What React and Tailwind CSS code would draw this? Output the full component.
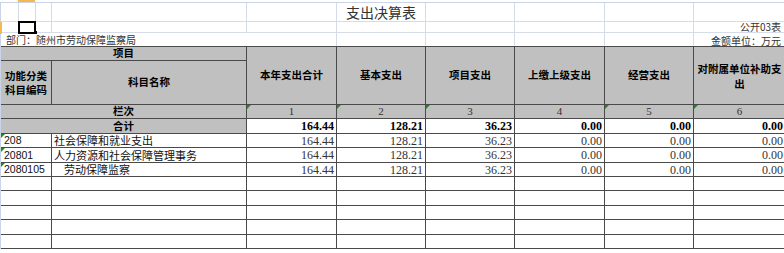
const COLS = 'grid-cols-[18px_17px_16px_195px_90px_89px_89px_90px_89px_91px]';
const CJK = "font-['Noto_Sans_CJK_SC','Noto_Sans',sans-serif]";
const NUM = "font-['Liberation_Serif','Noto_Sans_CJK_SC',serif]";

const rows = [
  { code: '208', name: '社会保障和就业支出', indent: false },
  { code: '20801', name: '人力资源和社会保障管理事务', indent: false },
  { code: '2080105', name: '劳动保障监察', indent: true },
];
const values = ['164.44', '128.21', '36.23', '0.00', '0.00', '0.00'];
const heads = ['本年支出合计', '基本支出', '项目支出', '上缴上级支出', '经营支出'];

function Tri() {
  return (
    <span className="absolute left-0 top-0 w-0 h-0 border-t-[4px] border-r-[4px] border-t-[#1f8a1f] border-r-transparent" />
  );
}

// dark table cell
const cell = 'relative box-border border-r border-b border-[#4a4a4a]';
const grid = 'box-border border-r border-b border-[#d5dce7]';

export default function App() {
  return (
    <div className={`w-[784px] h-[253px] bg-white overflow-hidden text-[#222] ${CJK}`}>
      {/* sheet top (column header edge) */}
      <div className="relative h-[3px] border-b border-[#c9d5e6]">
        <span className="absolute left-[18px] top-0 w-[17px] h-[2px] bg-[#f5b94f]" />
      </div>

      {/* top rows */}
      <div className={`grid ${COLS} grid-rows-[19px_11px_13px] border-l border-[#c9d5e6]`}>
        {/* row 1 */}
        <div className={grid} />
        <div className={grid} />
        <div className={grid} />
        <div className={grid} />
        <div className={grid} />
        <div className={`${grid} flex items-center justify-center text-[14px] leading-none text-[#333] whitespace-nowrap`}>
          支出决算表
        </div>
        <div className={grid} />
        <div className={grid} />
        <div className={grid} />
        <div className={grid} />

        {/* row 2 */}
        <div className={`${grid} relative`}>
          <span className="absolute -left-px top-0 w-[2px] h-[12px] bg-[#f5b94f]" />
        </div>
        <div className="relative box-border border-b border-r border-[#d5dce7]">
          <span className="absolute -left-px -top-px w-[18px] h-[13px] border-2 border-black" />
          <span className="absolute right-[-2px] bottom-[-2px] w-[3px] h-[3px] bg-black" />
        </div>
        <div className={grid} />
        <div className={grid} />
        <div className={grid} />
        <div className={grid} />
        <div className={grid} />
        <div className={grid} />
        <div className={grid} />
        <div className={`${grid} flex items-center justify-end pr-[3px] text-[10px] leading-[10px] text-[#333] whitespace-nowrap`}>
          公开03表
        </div>

        {/* row 3 */}
        <div className="col-span-4 flex items-center pl-[5px] text-[10px] leading-[10px] text-[#333] whitespace-nowrap">
          部门：随州市劳动保障监察局
        </div>
        <div className="border-r border-[#d5dce7]" />
        <div className="border-r border-[#d5dce7]" />
        <div className="border-r border-[#d5dce7]" />
        <div className="border-r border-[#d5dce7]" />
        <div className="border-r border-[#d5dce7]" />
        <div className="flex items-center justify-end pr-[4px] pt-[2px] text-[10px] leading-[10px] text-[#333] whitespace-nowrap">
          金额单位：万元
        </div>
      </div>

      {/* table */}
      <div
        className={`grid ${COLS} grid-rows-[15px_44px_14px_15px_14px_15px_14px_14px_15px_14px_15px_14px] border-l border-[#c9d5e6]`}
      >
        <div className={`${cell} col-span-4 border-t bg-[#c0c0c0] flex items-center justify-center text-[10.5px] font-bold leading-none text-black`}>
          项目
        </div>
        {heads.map((h) => (
          <div
            key={h}
            className={`${cell} row-span-2 border-t bg-[#c0c0c0] flex items-center justify-center text-[10.5px] font-bold leading-none text-black whitespace-nowrap`}
          >
            {h}
          </div>
        ))}
        <div className={`row-span-2 relative box-border border-b border-t border-[#4a4a4a] bg-[#c0c0c0] flex items-center justify-center text-center text-[10.5px] font-bold leading-[15px] text-black`}>
          对附属单位补助支
          <br />
          出
        </div>
        <div className={`${cell} col-span-3 bg-[#c0c0c0] flex items-center justify-center text-center text-[10.5px] font-bold leading-[14px] text-black`}>
          功能分类
          <br />
          科目编码
        </div>
        <div className={`${cell} bg-[#c0c0c0] flex items-center justify-center text-[10.5px] font-bold leading-none text-black`}>
          科目名称
        </div>

        {/* 栏次 */}
        <div className={`${cell} col-span-4 bg-[#c0c0c0] flex items-center justify-center text-[10.5px] font-bold leading-none text-black`}>
          栏次
        </div>
        {[1, 2, 3, 4, 5, 6].map((n) => (
          <div
            key={n}
            className={`${cell} ${n === 6 ? 'border-r-0' : ''} bg-[#c0c0c0] flex items-center justify-center text-[11px] leading-none text-[#333] ${NUM}`}
          >
            {n !== 4 && <Tri />}
            {n}
          </div>
        ))}

        {/* 合计 */}
        <div className={`${cell} col-span-4 bg-[#c0c0c0] flex items-center justify-center text-[10.5px] font-bold leading-none text-black`}>
          合计
        </div>
        {values.map((v, i) => (
          <div
            key={i}
            className={`${cell} ${i === 5 ? 'border-r-0' : ''} flex items-center justify-end pr-[2px] text-[12px] font-bold leading-none text-black ${NUM}`}
          >
            {v}
          </div>
        ))}

        {/* data rows */}
        {rows.map((r) => (
          <div key={r.code} className="contents">
            <div className={`${cell} col-span-3 flex items-center pl-[3px] text-[10.5px] leading-none text-[#111] font-['Liberation_Sans',sans-serif]`}>
              <Tri />
              {r.code}
            </div>
            <div className={`${cell} flex items-center ${r.indent ? 'pl-[12px]' : 'pl-[2px]'} text-[11px] leading-none text-[#111] whitespace-nowrap`}>
              {r.name}
            </div>
            {values.map((v, i) => (
              <div
                key={i}
                className={`${cell} ${i === 5 ? 'border-r-0' : ''} flex items-center justify-end pr-[2px] text-[12px] leading-none text-[#333] ${NUM}`}
              >
                {v}
              </div>
            ))}
          </div>
        ))}

        {/* blank rows */}
        {[0, 1, 2, 3, 4].map((k) => (
          <div key={k} className="contents">
            <div className={`${cell} col-span-3`} />
            <div className={cell} />
            <div className={cell} />
            <div className={cell} />
            <div className={cell} />
            <div className={cell} />
            <div className={cell} />
            <div className={`${cell} border-r-0`} />
          </div>
        ))}
      </div>
    </div>
  );
}
